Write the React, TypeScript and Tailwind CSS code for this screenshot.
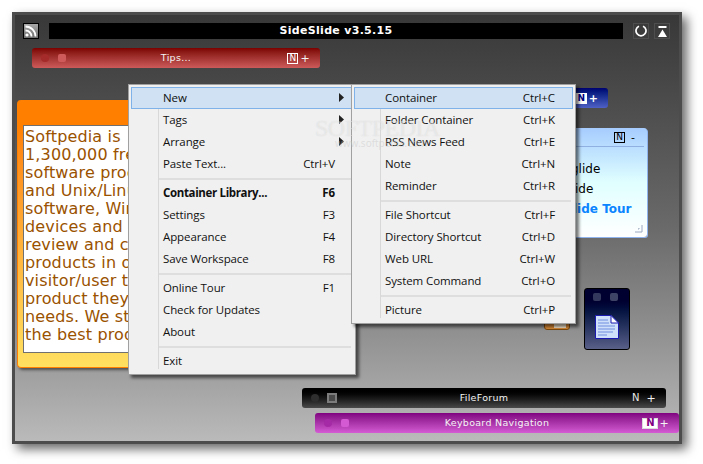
import React from "react";

type Item = { label?: string; key?: string; bold?: boolean; arrow?: boolean; active?: boolean; sep?: boolean };

const mainMenu: Item[] = [
  { label: "New", arrow: true, active: true },
  { label: "Tags", arrow: true },
  { label: "Arrange", arrow: true },
  { label: "Paste Text...", key: "Ctrl+V" },
  { sep: true },
  { label: "Container Library...", key: "F6", bold: true },
  { label: "Settings", key: "F3" },
  { label: "Appearance", key: "F4" },
  { label: "Save Workspace", key: "F8" },
  { sep: true },
  { label: "Online Tour", key: "F1" },
  { label: "Check for Updates" },
  { label: "About" },
  { sep: true },
  { label: "Exit" },
];

const subMenu: Item[] = [
  { label: "Container", key: "Ctrl+C", active: true },
  { label: "Folder Container", key: "Ctrl+K" },
  { label: "RSS News Feed", key: "Ctrl+E" },
  { label: "Note", key: "Ctrl+N" },
  { label: "Reminder", key: "Ctrl+R" },
  { sep: true },
  { label: "File Shortcut", key: "Ctrl+F" },
  { label: "Directory Shortcut", key: "Ctrl+D" },
  { label: "Web URL", key: "Ctrl+W" },
  { label: "System Command", key: "Ctrl+O" },
  { sep: true },
  { label: "Picture", key: "Ctrl+P" },
];

const noteLines = [
  "Softpedia is\u00a0 a library of over",
  "1,300,000 free and free-to-try",
  "software programs for Windows",
  "and Unix/Linux, games, Mac",
  "software, Windows drivers, mobile",
  "devices and IT-related articles.",
  "review and categorize these",
  "products in order to allow the",
  "visitor/user to find the exact",
  "product they and their system",
  "needs. We strive to deliver only",
  "the best products to the visitor",
];

function Menu({
  items,
  className,
  gutter,
  pad,
  sepPad,
}: {
  items: Item[];
  className: string;
  gutter: string;
  pad: string;
  sepPad: string;
}) {
  return (
    <div
      className={`absolute border border-[#a0a0a0] bg-[#f0f0f0] p-[2px] shadow-[3px_3px_3px_rgba(0,0,0,0.55)] font-['Open_Sans',sans-serif] text-[11.5px] tracking-[-0.1px] text-[#101010] ${className}`}
    >
      <div className="relative flex flex-col">
        <div className={`absolute bottom-[3px] top-0 w-px bg-[#d8d8d8] ${gutter}`} />
        {items.map((it, i) =>
          it.sep ? (
            <div key={i} className={`flex h-[7px] items-center pr-[2px] ${sepPad}`}>
              <div className="h-[2px] w-full bg-[#dedede]" />
            </div>
          ) : (
            <div
              key={i}
              className={`relative flex h-[22px] items-center ${pad} ${it.active ? "bg-[#cfe1f2] outline outline-1 -outline-offset-1 outline-[#7fb2e8]" : ""}`}
            >
              <span className={it.bold ? "font-bold tracking-[-0.35px]" : ""}>{it.label}</span>
              {it.key && (
                <span className={`absolute right-[18px] ${it.bold ? "font-bold" : ""}`}>{it.key}</span>
              )}
              {it.arrow && (
                <svg className="absolute right-[9px] top-[6px]" width="5" height="9" viewBox="0 0 5 9">
                  <path d="M0 0 L5 4.5 L0 9 Z" fill="#222" />
                </svg>
              )}
            </div>
          ),
        )}
      </div>
    </div>
  );
}

function NBox({ className }: { className: string }) {
  return (
    <span className={`flex h-[11px] w-[11px] items-center justify-center border text-[9px] leading-none ${className}`}>
      N
    </span>
  );
}

function Bar({
  title,
  className,
  gradient,
  dot1,
  dot2,
  n,
}: {
  title: string;
  className: string;
  gradient: string;
  dot1: string;
  dot2: React.ReactNode;
  n: React.ReactNode;
}) {
  return (
    <div
      className={`absolute flex h-[20px] items-center rounded-[3px] font-['DejaVu_Sans',sans-serif] text-[9.5px] tracking-[0.3px] text-[#f4f4f4] ${gradient} ${className}`}
    >
      <div className="flex w-[50px] items-center pl-[9px]">
        <span className={`h-[8px] w-[8px] rounded-full ${dot1}`} />
        <span className="ml-[9px] flex w-[8px] justify-center">{dot2}</span>
      </div>
      <span className="flex-1 text-center">{title}</span>
      <div className="flex w-[50px] items-center justify-end pr-[10px]">
        {n}
        <span className="ml-[2px] text-[11px] leading-none">+</span>
      </div>
    </div>
  );
}

export default function App() {
  return (
    <div className="h-[464px] w-[703px] overflow-hidden bg-white pl-[12px] pt-[12px]">
      <div className="relative h-[432px] w-[670px] border-[3px] border-[#4c4c4c] bg-gradient-to-b from-[#383838] via-[#6a6a6a] to-[#bababa] shadow-[5px_5px_10px_rgba(0,0,0,0.6)]">
        {/* title row */}
        <div className="mt-[8px] flex h-[16px] items-center pl-[8px] pr-[9px]">
          <span className="flex h-[16px] w-[16px] items-center justify-center border border-black bg-gradient-to-b from-[#a8a8a8] to-[#707070]">
            <svg width="12" height="12" viewBox="0 0 12 12">
              <circle cx="2" cy="10" r="1.6" fill="#fff" />
              <path d="M0.5 5.5 A6 6 0 0 1 6.5 11.5" fill="none" stroke="#fff" strokeWidth="1.8" />
              <path d="M0.5 1.5 A10 10 0 0 1 10.5 11.5" fill="none" stroke="#fff" strokeWidth="1.8" />
            </svg>
          </span>
          <div className="ml-[10px] flex h-[16px] w-[575px] items-center justify-center bg-black font-['DejaVu_Sans',sans-serif] text-[11px] font-bold tracking-[0.3px] text-white">
            SideSlide v3.5.15
          </div>
          <span className="ml-[10px] flex h-[16px] w-[16px] items-center justify-center border border-[#4e4e4e]">
            <svg width="12" height="12" viewBox="0 0 12 12">
              <path d="M4 1.2 A5 5 0 1 0 8 1.2" fill="none" stroke="#fff" strokeWidth="1.7" />
            </svg>
          </span>
          <span className="ml-[5px] flex h-[16px] w-[16px] items-center justify-center border border-[#4e4e4e]">
            <svg width="9" height="11" viewBox="0 0 9 11">
              <rect x="0.5" y="0" width="8" height="2" fill="#fff" />
              <path d="M4.5 3.5 L9 11 L0 11 Z" fill="#fff" />
            </svg>
          </span>
        </div>

        {/* bars */}
        <Bar
          title="Tips..."
          className="left-[17px] top-[33px] w-[288px]"
          gradient="bg-gradient-to-b from-[#7c0000] to-[#cc5a5a]"
          dot1="bg-[#a52a2a]"
          dot2={<span className="h-[8px] w-[8px] rounded-[2px] bg-[#cf5a5a]" />}
          n={<NBox className="border-white text-white" />}
        />
        <div className="absolute left-[500px] top-[73px] flex h-[20px] w-[93px] items-center justify-end rounded-[3px] bg-gradient-to-b from-[#000070] to-[#5060c4] pr-[10px] font-['DejaVu_Sans',sans-serif] text-white">
          <NBox className="border-white bg-white font-bold text-[#000080]" />
          <span className="ml-[2px] text-[11px] font-bold leading-none">+</span>
        </div>
        <Bar
          title="FileForum"
          className="left-[287px] top-[373px] w-[364px]"
          gradient="bg-gradient-to-b from-black to-[#4a4a4a]"
          dot1="bg-[#2e2e2e]"
          dot2={<span className="h-[10px] w-[10px] shrink-0 border-[2px] border-[#7c7c7c] bg-[#4a4a4a]" />}
          n={<NBox className="mr-[3px] border-transparent text-[10px] text-[#e8e8e8]" />}
        />
        <Bar
          title="Keyboard Navigation"
          className="left-[300px] top-[398px] w-[364px]"
          gradient="bg-gradient-to-b from-[#800080] to-[#d45ad4]"
          dot1="bg-[#a52aa5]"
          dot2={<span className="h-[8px] w-[8px] rounded-[2px] bg-[#d45ad4]" />}
          n={
            <span className="-mr-[1px] flex h-[11px] w-[16px] items-center justify-center border border-[#ddd] bg-white text-[10px] font-bold leading-none text-[#800080]">
              N
            </span>
          }
        />

        {/* orange note */}
        <div className="absolute left-[2px] top-[85px] h-[268px] w-[125px] overflow-hidden rounded-[4px] border-b border-l border-[#ff8000] bg-gradient-to-b from-[#ff8000] from-10% to-[#ffe060] shadow-[2px_2px_3px_rgba(0,0,0,0.5)]">
          <div className="ml-[5px] mt-[25px] h-[228px] w-[140px] border border-[#707070] bg-white pl-[1px] pt-[2px] font-['DejaVu_Sans',sans-serif] text-[16px] leading-[18px] tracking-[0.15px] text-[#9a5200]">
            {noteLines.map((l) => (
              <div key={l} className="whitespace-nowrap">
                {l}
              </div>
            ))}
          </div>
        </div>

        {/* light blue note */}
        <div className="absolute left-[500px] top-[113px] h-[109px] w-[132px] rounded-[3px] bg-gradient-to-b from-[#a6ccff] via-[#e0ffff] to-white font-['DejaVu_Sans',sans-serif] text-black shadow-[1px_1px_0_#8fb4ee]">
          <div className="ml-[6px] mr-[3px] flex h-[19px] items-center justify-end border-b border-[#8fb0e0]">
            <NBox className="border-black text-black" />
            <span className="ml-[6px] mr-[9px] text-[11px] leading-none">-</span>
          </div>
          <div className="mt-[12px] text-[12px] leading-[20px]">
            <div className="ml-[56px]">glide</div>
            <div className="ml-[60px]">ide</div>
            <div className="ml-[58px] whitespace-nowrap font-bold text-[#0a84ff]">lide Tour</div>
          </div>
          <svg className="absolute bottom-[4px] right-[4px]" width="8" height="8" viewBox="0 0 8 8">
            <path d="M7 0 V7 H0 M4 3 V4 H3" fill="none" stroke="#9aa8c0" strokeWidth="1" />
          </svg>
        </div>

        {/* small orange icon behind menu */}
        <div className="absolute left-[529px] top-[300px] h-[15px] w-[26px] rounded-[3px] border border-[#7a4a10] bg-[#d88a38]">
          <span className="absolute bottom-[1px] right-[3px] block h-[4px] w-[12px] bg-[#f6e8d0]" />
        </div>

        {/* file note */}
        <div className="absolute left-[569px] top-[273px] flex h-[62px] w-[46px] flex-col rounded-[3px] border border-black bg-gradient-to-b from-[#000030] from-20% to-[#5a6088]">
          <div className="ml-[8px] mt-[4px] flex gap-[9px]">
            <span className="h-[8px] w-[8px] rounded-[2px] bg-[#33395c]" />
            <span className="h-[8px] w-[8px] rounded-[2px] bg-[#3e4466]" />
          </div>
          <svg className="ml-[10px] mt-[14px]" width="24" height="24" viewBox="0 0 24 24">
            <path d="M0.5 0.5 H16 L23.5 8 V23.5 H0.5 Z" fill="#cfe0fa" stroke="#1a1ab0" />
            <path d="M16 0.5 V8 H23.5 Z" fill="#fff" stroke="#1a1ab0" />
            <path d="M3 5 H13 M3 8 H14 M3 11 H20 M3 14 H20 M3 17 H18 M3 20 H12" stroke="#6f8fe0" strokeWidth="1" />
          </svg>
        </div>

        {/* menus */}
        <Menu
          items={mainMenu}
          className="left-[113px] top-[69px] w-[228px]"
          gutter="left-[27px]"
          pad="pl-[32px]"
          sepPad="pl-[28px]"
        />
        <Menu
          items={subMenu}
          className="left-[336px] top-[69px] w-[225px]"
          gutter="left-[26px]"
          pad="pl-[31px]"
          sepPad="pl-[27px]"
        />

        {/* watermark */}
        <div className="pointer-events-none absolute left-[300px] top-[95px] font-['Liberation_Serif',serif] text-[24px] tracking-[-0.5px] text-white/40 [text-shadow:0_0_1px_rgba(170,170,170,0.35)]">
          SOFTPEDIA
        </div>
        <div className="pointer-events-none absolute left-[320px] top-[121px] font-['Open_Sans',sans-serif] text-[10px] text-[#c8c8c8]/50">
          www.softpedia.com
        </div>
      </div>
    </div>
  );
}
